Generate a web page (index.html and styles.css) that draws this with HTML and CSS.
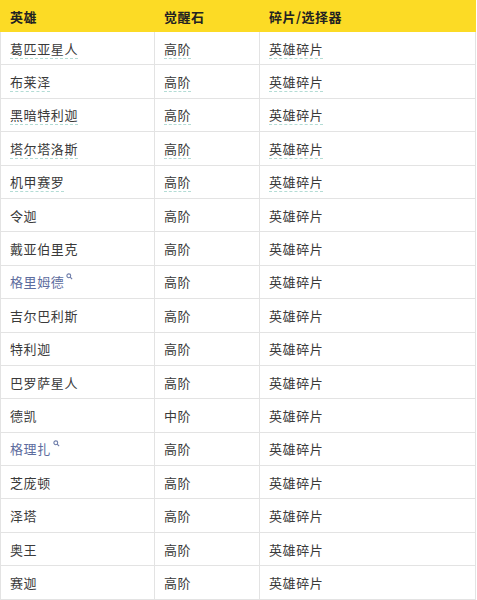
FILE: index.html
```html
<!DOCTYPE html>
<html lang="zh">
<head>
<meta charset="utf-8">
<link rel="stylesheet" href="styles.css">
</head>
<body>
<table class="tbl">
  <colgroup><col class="c1"><col class="c2"><col class="c3"></colgroup>
  <thead>
    <tr><th>英雄</th><th>觉醒石</th><th>碎片/选择器</th></tr>
  </thead>
  <tbody>
    <tr><td><span class="u">葛匹亚星人</span></td><td><span class="u">高阶</span></td><td><span class="u">英雄碎片</span></td></tr>
    <tr><td><span class="u">布莱泽</span></td><td><span class="u">高阶</span></td><td><span class="u">英雄碎片</span></td></tr>
    <tr><td><span class="u">黑暗特利迦</span></td><td><span class="u">高阶</span></td><td><span class="u">英雄碎片</span></td></tr>
    <tr><td><span class="u">塔尔塔洛斯</span></td><td><span class="u">高阶</span></td><td><span class="u">英雄碎片</span></td></tr>
    <tr><td><span class="u">机甲赛罗</span></td><td><span class="u">高阶</span></td><td><span class="u">英雄碎片</span></td></tr>
    <tr><td>令迦</td><td>高阶</td><td>英雄碎片</td></tr>
    <tr><td>戴亚伯里克</td><td>高阶</td><td>英雄碎片</td></tr>
    <tr><td><span class="link">格里姆德</span><svg class="mag" viewBox="0 0 8 8" width="7" height="7"><circle cx="3.2" cy="3.2" r="2.2" fill="none" stroke="#6b7aa8" stroke-width="1.2"/><line x1="4.8" y1="4.8" x2="7" y2="7" stroke="#6b7aa8" stroke-width="1.3"/></svg></td><td>高阶</td><td>英雄碎片</td></tr>
    <tr><td>吉尔巴利斯</td><td>高阶</td><td>英雄碎片</td></tr>
    <tr><td>特利迦</td><td>高阶</td><td>英雄碎片</td></tr>
    <tr><td>巴罗萨星人</td><td>高阶</td><td>英雄碎片</td></tr>
    <tr><td>德凯</td><td>中阶</td><td>英雄碎片</td></tr>
    <tr><td><span class="link">格理扎</span><svg class="mag" viewBox="0 0 8 8" width="7" height="7"><circle cx="3.2" cy="3.2" r="2.2" fill="none" stroke="#6b7aa8" stroke-width="1.2"/><line x1="4.8" y1="4.8" x2="7" y2="7" stroke="#6b7aa8" stroke-width="1.3"/></svg></td><td>高阶</td><td>英雄碎片</td></tr>
    <tr><td>芝庞顿</td><td>高阶</td><td>英雄碎片</td></tr>
    <tr><td>泽塔</td><td>高阶</td><td>英雄碎片</td></tr>
    <tr><td>奥王</td><td>高阶</td><td>英雄碎片</td></tr>
    <tr><td>赛迦</td><td>高阶</td><td>英雄碎片</td></tr>
  </tbody>
</table>
</body>
</html>
```
FILE: styles.css
```css
html, body {
  margin: 0;
  padding: 0;
  background: #ffffff;
}
body {
  font-family: "Noto Sans CJK SC", "Noto Sans", sans-serif;
  font-size: 13px;
  color: #3a3a3a;
}
.tbl {
  border-collapse: collapse;
  width: 476px;
  table-layout: fixed;
}
.c1 { width: 154px; }
.c2 { width: 105px; }
.c3 { width: auto; }
.tbl th {
  background: #fcdb25;
  color: #222222;
  font-weight: bold;
  text-align: left;
  height: 30px;
  padding: 0 9px;
  border: 1px solid #fcdb25;
  border-left: 1px solid #ece3b8;
  letter-spacing: 0.5px;
}
.tbl th:first-child { border-left-color: #fcdb25; }
.tbl td {
  height: 32.4px;
  padding: 0 9px;
  border: 1px solid #e3e3e3;
  letter-spacing: 0.6px;
  white-space: nowrap;
}
.u {
  text-decoration: underline dashed #b3dcd5;
  text-underline-offset: 4px;
  text-decoration-thickness: 1px;
}
.link {
  color: #5d6c9e;
}
.mag {
  vertical-align: 7px;
  margin-left: 2px;
}
```
